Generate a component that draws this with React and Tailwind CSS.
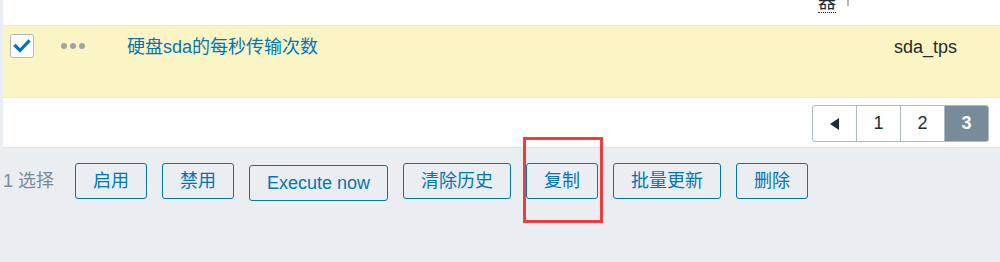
import React from 'react';

const font = "font-['Liberation_Sans','Noto_Sans_CJK_SC',sans-serif]";

const ActionButton = ({ label, className = '' }) => (
  <button
    className={`h-[36px] px-[17px] border border-[#0275b8] rounded-[3px] text-[18px] leading-none text-[#0275b8] bg-transparent ${className}`}
  >
    {label}
  </button>
);

const PageCell = ({ children, active, first, last }) => (
  <div
    className={`w-[45px] h-[37px] flex items-center justify-center border border-[#acbbc2] text-[18px] ${
      first ? 'rounded-l-[3px]' : '-ml-px'
    } ${last ? 'rounded-r-[3px]' : ''} ${
      active ? 'bg-[#768d99] border-[#768d99] text-white font-bold' : 'bg-white text-[#1f2c33]'
    }`}
  >
    {children}
  </div>
);

export default function App() {
  return (
    <div className={`relative w-[1000px] h-[262px] overflow-hidden bg-[#ebeef0] pl-[3px] ${font}`}>
      <div className="bg-white border-b border-[#dfe4e7]">
        {/* header row, mostly scrolled off */}
        <div className="grid grid-cols-[50px_66px_689px_78px_1fr] h-[26px] items-start border-b border-[#e6e9ec] overflow-hidden">
          <div />
          <div />
          <div />
          <div className="pl-[10px] flex items-start gap-[11px] text-[18px] text-[#1f2c33]">
            <span className="inline-block -mt-[7px] leading-[19px] border-b border-dotted border-[#1f2c33]">器</span>
            <span className="block w-[2px] h-[6px] bg-[#acbbc2]" />
          </div>
          <div />
        </div>

        {/* selected row */}
        <div className="grid grid-cols-[50px_66px_689px_78px_1fr] h-[72px] items-start bg-[#fbf5c5] border-b border-[#e6e9ec] text-[18px]">
          <div className="pl-[7px] pt-[8px]">
            <div className="w-[24px] h-[24px] bg-white border border-[#acbbc2] rounded-[3px] flex items-center justify-center">
              <svg width="18" height="18" viewBox="0 0 18 18">
                <polyline points="2.5,9 7,13.5 15.5,4.5" fill="none" stroke="#0275b8" strokeWidth="3.2" strokeLinecap="square" />
              </svg>
            </div>
          </div>
          <div className="pl-[8px] pt-[17px] flex gap-[3px]">
            <span className="w-[6px] h-[6px] rounded-full bg-[#9aa5ab]" />
            <span className="w-[6px] h-[6px] rounded-full bg-[#9aa5ab]" />
            <span className="w-[6px] h-[6px] rounded-full bg-[#9aa5ab]" />
          </div>
          <div className="pl-[8px] pt-[9px] text-[#0275b8] leading-[24px]">硬盘sda的每秒传输次数</div>
          <div />
          <div className="pl-[8px] pt-[9px] text-[#1f2c33] leading-[24px]">sda_tps</div>
        </div>

        {/* pagination */}
        <div className="flex justify-end pr-[11px] pt-[7px] pb-[5px]">
          <div className="flex">
            <PageCell first>
              <svg width="10" height="12" viewBox="0 0 10 12">
                <polygon points="9,0 9,12 0,6" fill="#1f2c33" />
              </svg>
            </PageCell>
            <PageCell>1</PageCell>
            <PageCell>2</PageCell>
            <PageCell active last>3</PageCell>
          </div>
        </div>
      </div>

      {/* action bar */}
      <div className="flex items-start pt-[15px]">
        <span className="text-[18px] text-[#768d99] h-[36px] flex items-center mr-[21px]">1 选择</span>
        <div className="flex items-start gap-[15px]">
          <ActionButton label="启用" />
          <ActionButton label="禁用" />
          <ActionButton label="Execute now" className="mt-[2px]" />
          <ActionButton label="清除历史" />
          <ActionButton label="复制" />
          <ActionButton label="批量更新" />
          <ActionButton label="删除" />
        </div>
      </div>

      {/* annotation box */}
      <div className="absolute left-[523px] top-[137px] w-[80px] h-[86px] border-[3px] border-[#f03c3c]" />
    </div>
  );
}
